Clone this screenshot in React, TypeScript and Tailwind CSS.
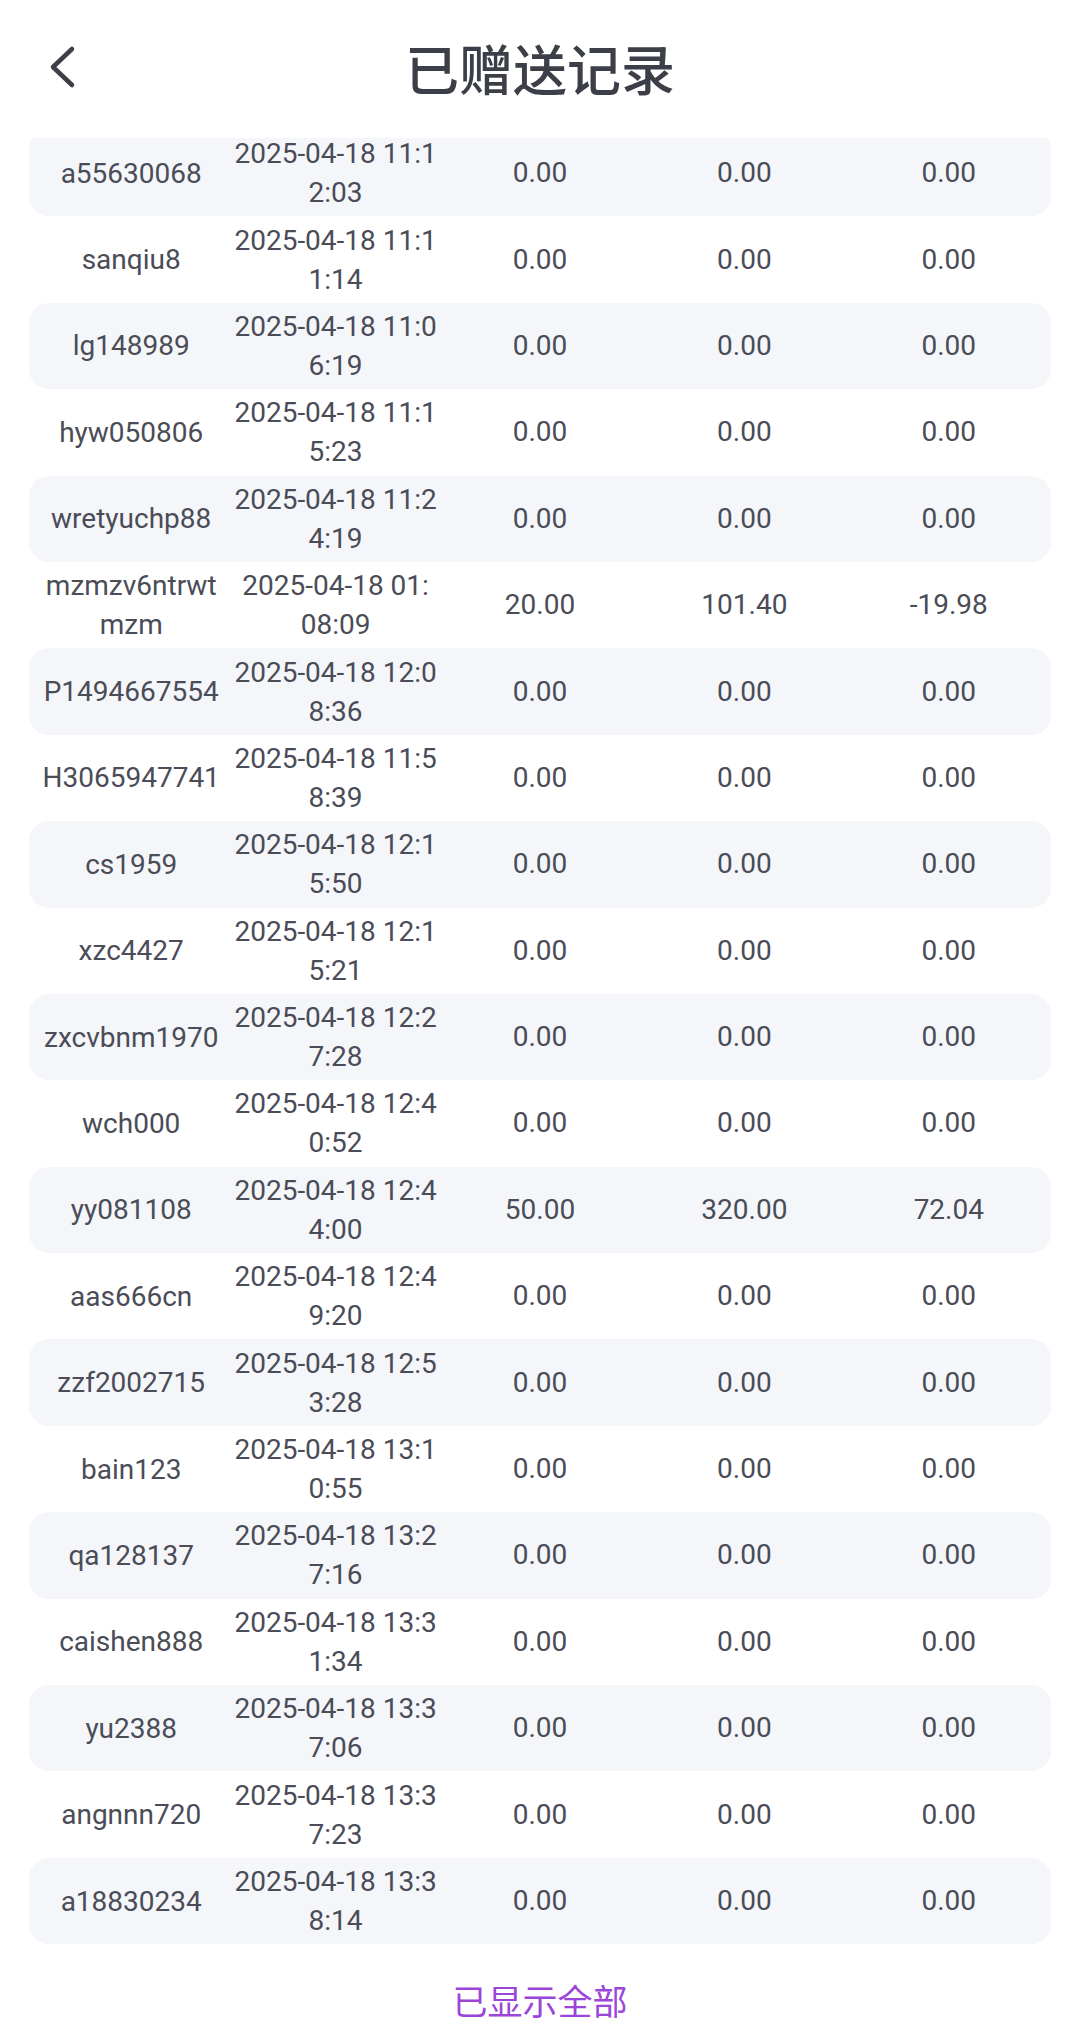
import React from "react";

type Row = { name: string[]; date: string[]; a: string; b: string; c: string };

const rows: Row[] = [
  { name: ["a55630068"], date: ["2025-04-18 11:1", "2:03"], a: "0.00", b: "0.00", c: "0.00" },
  { name: ["sanqiu8"], date: ["2025-04-18 11:1", "1:14"], a: "0.00", b: "0.00", c: "0.00" },
  { name: ["lg148989"], date: ["2025-04-18 11:0", "6:19"], a: "0.00", b: "0.00", c: "0.00" },
  { name: ["hyw050806"], date: ["2025-04-18 11:1", "5:23"], a: "0.00", b: "0.00", c: "0.00" },
  { name: ["wretyuchp88"], date: ["2025-04-18 11:2", "4:19"], a: "0.00", b: "0.00", c: "0.00" },
  { name: ["mzmzv6ntrwt", "mzm"], date: ["2025-04-18 01:", "08:09"], a: "20.00", b: "101.40", c: "-19.98" },
  { name: ["P1494667554"], date: ["2025-04-18 12:0", "8:36"], a: "0.00", b: "0.00", c: "0.00" },
  { name: ["H3065947741"], date: ["2025-04-18 11:5", "8:39"], a: "0.00", b: "0.00", c: "0.00" },
  { name: ["cs1959"], date: ["2025-04-18 12:1", "5:50"], a: "0.00", b: "0.00", c: "0.00" },
  { name: ["xzc4427"], date: ["2025-04-18 12:1", "5:21"], a: "0.00", b: "0.00", c: "0.00" },
  { name: ["zxcvbnm1970"], date: ["2025-04-18 12:2", "7:28"], a: "0.00", b: "0.00", c: "0.00" },
  { name: ["wch000"], date: ["2025-04-18 12:4", "0:52"], a: "0.00", b: "0.00", c: "0.00" },
  { name: ["yy081108"], date: ["2025-04-18 12:4", "4:00"], a: "50.00", b: "320.00", c: "72.04" },
  { name: ["aas666cn"], date: ["2025-04-18 12:4", "9:20"], a: "0.00", b: "0.00", c: "0.00" },
  { name: ["zzf2002715"], date: ["2025-04-18 12:5", "3:28"], a: "0.00", b: "0.00", c: "0.00" },
  { name: ["bain123"], date: ["2025-04-18 13:1", "0:55"], a: "0.00", b: "0.00", c: "0.00" },
  { name: ["qa128137"], date: ["2025-04-18 13:2", "7:16"], a: "0.00", b: "0.00", c: "0.00" },
  { name: ["caishen888"], date: ["2025-04-18 13:3", "1:34"], a: "0.00", b: "0.00", c: "0.00" },
  { name: ["yu2388"], date: ["2025-04-18 13:3", "7:06"], a: "0.00", b: "0.00", c: "0.00" },
  { name: ["angnnn720"], date: ["2025-04-18 13:3", "7:23"], a: "0.00", b: "0.00", c: "0.00" },
  { name: ["a18830234"], date: ["2025-04-18 13:3", "8:14"], a: "0.00", b: "0.00", c: "0.00" },
];

function Lines({ lines }: { lines: string[] }) {
  return (
    <div className="flex flex-col items-center leading-[39px]">
      {lines.map((l, i) => (
        <span key={i} className="whitespace-nowrap">
          {l}
        </span>
      ))}
    </div>
  );
}

export default function App() {
  return (
    <div
      className="w-[1080px] h-[2023px] overflow-hidden bg-white flex flex-col"
      style={{ fontFamily: 'Roboto, "Noto Sans CJK SC", sans-serif' }}
    >
      <header className="relative h-[138px] shrink-0 flex items-center justify-center bg-white z-10">
        <svg
          className="absolute left-[44px] top-[40px]"
          width="40"
          height="54"
          viewBox="0 0 40 54"
          fill="none"
        >
          <path
            d="M28 9 L9 27 L28 45"
            stroke="#3c3e48"
            strokeWidth="4.5"
            strokeLinecap="round"
            strokeLinejoin="round"
          />
        </svg>
        <h1
          className="text-[54px] font-medium text-[#3c3e48] leading-none mt-[-2px]"
          style={{ fontFamily: '"Noto Sans CJK SC", sans-serif' }}
        >
          已赠送记录
        </h1>
      </header>
      <main className="flex-1 overflow-hidden">
        <div className="mt-[-8px] px-[29px] flex flex-col">
          {rows.map((r, i) => (
            <div
              key={i}
              className={`h-[86.4px] grid grid-cols-5 items-center rounded-[20px] text-[28px] text-[#4a4c57] ${
                i % 2 === 0 ? "bg-[#f5f6fa]" : ""
              }`}
            >
              <Lines lines={r.name} />
              <Lines lines={r.date} />
              <div className="text-center">{r.a}</div>
              <div className="text-center">{r.b}</div>
              <div className="text-center">{r.c}</div>
            </div>
          ))}
          <div
            className="pt-[33px] text-center text-[35px] leading-[46px] text-[#9b45d9]"
            style={{ fontFamily: '"Noto Sans CJK SC", sans-serif' }}
          >
            已显示全部
          </div>
        </div>
      </main>
    </div>
  );
}
